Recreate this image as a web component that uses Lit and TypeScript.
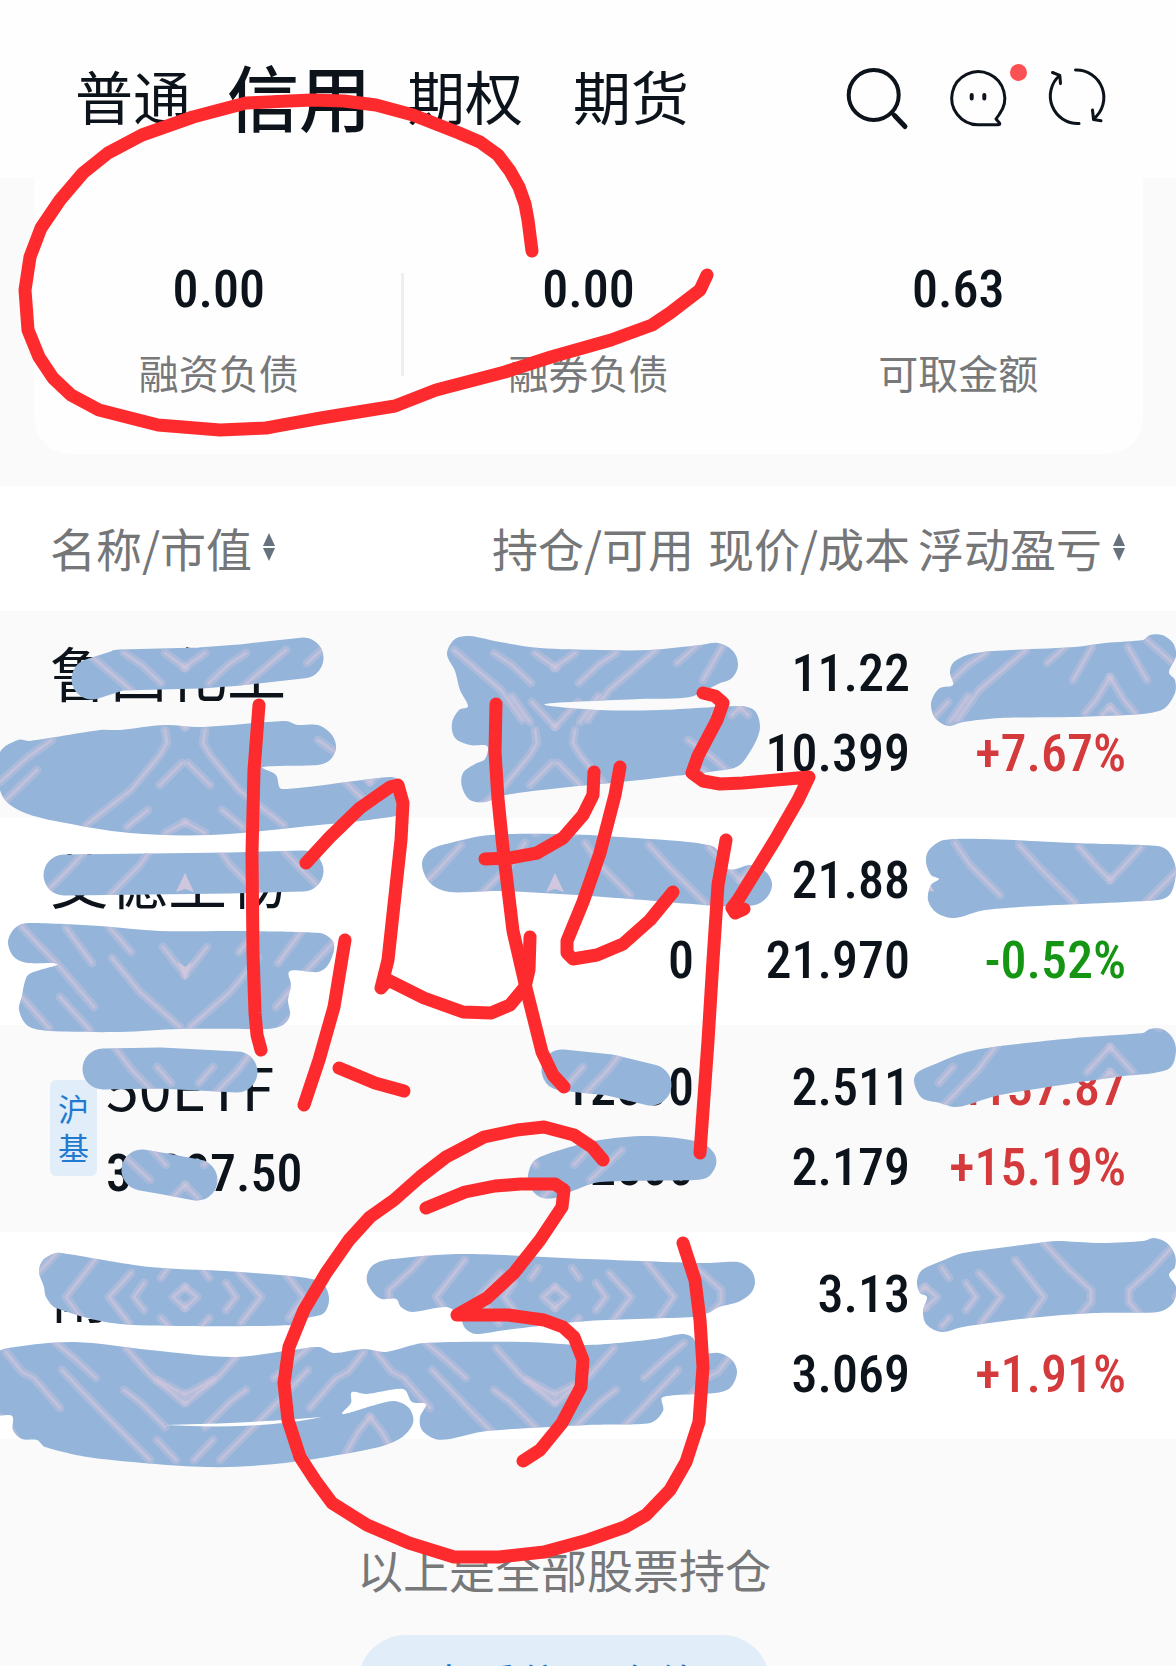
import { LitElement, html, svg, css, nothing } from "lit";
import { customElement, property, state } from "lit/decorators.js";
import { classMap } from "lit/directives/class-map.js";

type Point = [number, number];

interface Holding {
  name: string;
  badge?: string;
  value?: string;
  held?: string;
  available?: string;
  price: string;
  cost: string;
  profit?: string;
  rate: string;
  up: boolean;
}

const TABS = ["普通", "信用", "期权", "期货"];

const STATS = [
  { value: "0.00", label: "融资负债" },
  { value: "0.00", label: "融券负债" },
  { value: "0.63", label: "可取金额" },
];

const HOLDINGS: Holding[] = [
  { name: "鲁西化工", price: "11.22", cost: "10.399", rate: "+7.67%", up: true },
  { name: "艾德生物", available: "0", price: "21.88", cost: "21.970", rate: "-0.52%", up: false },
  {
    name: "50ETF",
    badge: "沪基",
    value: "31387.50",
    held: "12500",
    available: "12500",
    price: "2.511",
    cost: "2.179",
    profit: "+4137.87",
    rate: "+15.19%",
    up: true,
  },
  { name: "南方ETF", price: "3.13", cost: "3.069", rate: "+1.91%", up: true },
];

/* Marker blobs, listed as closed outlines. */
const BLOBS: Point[][] = [
  [[0,752],[18,740],[30,741],[100,730],[120,730],[165,725],[200,727],[285,721],[298,725],[318,725],[332,735],[336,748],[330,760],[318,765],[263,767],[276,775],[282,789],[390,777],[402,783],[404,800],[400,815],[300,827],[210,835],[130,833],[60,822],[25,813],[5,800],[-2,780]],
  [[447,654],[455,639],[470,636],[500,642],[540,648],[600,650],[650,650],[700,645],[718,643],[733,651],[738,665],[732,678],[718,684],[690,697],[640,699],[545,704],[600,710],[660,710],[740,706],[755,711],[760,727],[755,743],[742,763],[730,769],[640,780],[560,788],[505,795],[485,802],[470,800],[462,787],[463,773],[475,764],[485,759],[487,746],[470,745],[455,738],[452,723],[459,710],[468,706],[460,690],[455,671]],
  [[950,673],[953,663],[967,655],[993,651],[1075,647],[1105,643],[1143,640],[1150,635],[1162,635],[1173,643],[1176,656],[1169,672],[1175,680],[1175,693],[1165,708],[1150,713],[1128,715],[1075,717],[1000,718],[963,722],[948,726],[935,718],[931,706],[933,697],[940,688],[953,685]],
  [[8,942],[15,928],[28,923],[100,926],[160,931],[240,931],[320,933],[332,940],[334,950],[328,965],[318,972],[290,971],[291,985],[288,1000],[290,1015],[283,1025],[268,1029],[180,1029],[120,1032],[50,1031],[28,1026],[19,1010],[22,996],[24,985],[28,975],[40,970],[57,965],[52,963],[28,963],[14,957]],
  [[422,864],[430,850],[450,843],[490,835],[560,834],[620,837],[712,846],[728,869],[750,865],[765,871],[772,883],[768,896],[755,905],[720,906],[630,899],[560,894],[500,891],[450,892],[430,883]],
  [[926,862],[929,850],[944,840],[985,839],[1075,843],[1158,846],[1169,852],[1176,870],[1171,893],[1158,900],[1038,906],[985,910],[955,918],[937,913],[928,900],[931,885],[939,879],[931,875]],
  [[528,1175],[535,1160],[560,1150],[600,1140],[650,1136],[700,1142],[714,1153],[716,1165],[708,1177],[695,1180],[600,1182],[575,1190],[555,1198],[540,1197],[530,1187]],
  [[914,1082],[918,1072],[940,1062],[963,1053],[993,1047],[1075,1038],[1143,1033],[1150,1029],[1162,1029],[1172,1037],[1176,1050],[1171,1067],[1154,1073],[1124,1076],[1075,1083],[1000,1095],[967,1105],[954,1107],[940,1103],[922,1098]],
  [[39,1272],[43,1260],[56,1253],[68,1254],[150,1267],[225,1271],[300,1277],[322,1283],[329,1298],[324,1313],[308,1318],[292,1325],[187,1326],[112,1323],[56,1308],[46,1297],[44,1287]],
  [[367,1282],[371,1267],[386,1260],[461,1254],[588,1259],[700,1263],[738,1262],[751,1270],[755,1282],[751,1293],[738,1302],[719,1307],[708,1313],[693,1317],[588,1321],[506,1330],[476,1334],[465,1328],[459,1315],[446,1307],[412,1312],[401,1307],[396,1299],[379,1298]],
  [[-4,1355],[15,1347],[75,1342],[150,1350],[232,1357],[292,1350],[319,1347],[334,1353],[364,1349],[386,1352],[424,1343],[525,1342],[588,1345],[655,1339],[682,1334],[693,1338],[700,1353],[719,1353],[732,1360],[737,1373],[730,1388],[715,1393],[663,1397],[663,1411],[650,1423],[588,1425],[487,1431],[450,1439],[435,1439],[422,1430],[420,1417],[426,1404],[412,1402],[403,1389],[367,1394],[352,1392],[351,1403],[343,1414],[375,1405],[394,1401],[409,1408],[413,1423],[401,1438],[375,1448],[285,1463],[206,1467],[94,1458],[45,1447],[37,1440],[22,1439],[13,1430],[12,1416],[-4,1413]],
  [[917,1282],[922,1270],[944,1260],[963,1253],[1038,1243],[1057,1241],[1102,1243],[1143,1241],[1154,1238],[1167,1243],[1175,1255],[1175,1267],[1169,1275],[1176,1287],[1173,1303],[1158,1312],[1094,1313],[1030,1318],[963,1327],[942,1332],[927,1325],[923,1312],[927,1297],[920,1293]],
];

/* Single marker passes, listed as centre lines. */
const PASSES: Point[][] = [
  [[92,679],[120,670],[200,668],[240,665],[303,658]],
  [[64,875],[150,874],[230,873],[303,871]],
  [[103,1069],[160,1068],[237,1072]],
  [[142,1170],[165,1174],[197,1180]],
  [[562,1070],[610,1075],[651,1085]],
];

/* Light texture inside the marker, for one half tile of 185 units. */
const STREAKS: Point[][] = [
  [[84,650],[131,690],[152,720]], [[124,653],[142,665],[161,683]], [[165,653],[186,668]],
  [[37,640],[63,663]], [[18,647],[37,680]], [[0,677],[14,700],[25,713]], [[0,707],[8,715]],
  [[142,696],[160,722]], [[162,702],[185,727]],
  [[165,730],[167,743],[160,755],[131,790],[86,825]], [[182,763],[160,785]],
  [[52,740],[28,757],[0,782]], [[37,770],[6,800]], [[148,810],[127,827]], [[185,822],[165,833]],
  [[91,845],[70,868],[35,903]], [[155,843],[140,865],[110,895]], [[31,847],[12,868],[0,880]],
  [[22,927],[36,942],[60,967],[94,1007]], [[66,928],[92,963]], [[110,928],[131,952]],
  [[163,947],[185,975]], [[112,958],[140,992],[180,1027]], [[60,997],[90,1030]],
  [[22,997],[49,1028]], [[113,1045],[132,1070],[166,1105]], [[157,1067],[171,1083]],
  [[0,1047],[23,1072]], [[0,1072],[10,1082]], [[148,1145],[166,1165]], [[118,1150],[150,1180]], [[185,1185],[172,1198]],
  [[66,1243],[41,1270],[19,1290],[19,1302],[32,1317]],
  [[95,1260],[66,1297],[81,1318]], [[131,1273],[109,1297],[129,1323]],
  [[144,1283],[134,1297],[144,1310]], [[185,1287],[173,1297],[185,1308]],
  [[168,1268],[161,1278]], [[161,1318],[168,1326]],
  [[6,1352],[22,1372],[34,1378],[60,1408]], [[56,1343],[74,1358],[96,1378]],
  [[126,1348],[150,1375],[184,1403]], [[62,1370],[100,1410],[150,1460]],
  [[124,1390],[140,1402],[165,1427]], [[157,1380],[184,1394]], [[157,1440],[176,1460]],
  [[0,1417],[12,1432],[25,1455]],
];

/* Freehand red pen strokes. */
const PEN: Point[][] = [
  [[532,251],[528,220],[525,204],[519,187],[510,171],[498,155],[480,142],[459,133],[413,115],[376,105],[344,101],[312,100],[246,103],[193,117],[142,135],[108,153],[83,173],[60,200],[41,228],[30,257],[25,290],[28,330],[39,357],[53,378],[71,395],[99,410],[158,425],[220,430],[266,428],[321,418],[395,406],[436,390],[505,372],[551,357],[611,340],[652,325],[670,313],[700,290],[707,275]],
  [[259,705],[254,770],[252,853],[253,953],[255,1013],[257,1035],[261,1050]],
  [[306,863],[330,837],[360,808],[390,787],[398,785],[403,803],[401,840],[388,960],[381,988],[388,980],[424,998],[463,1012],[491,1013],[510,1005],[525,987],[529,970],[530,937]],
  [[345,940],[334,1007],[319,1060],[304,1105]],
  [[339,1068],[375,1083],[404,1091]],
  [[496,704],[495,752],[498,799],[503,848],[513,931],[527,992],[542,1052],[553,1075],[564,1087]],
  [[485,859],[510,858],[537,853],[563,838],[583,815],[593,795],[594,772]],
  [[620,767],[615,795],[600,853],[583,902],[567,941],[567,953],[573,959],[597,955],[623,944],[650,920],[673,892]],
  [[703,693],[715,696],[723,703],[717,720],[698,756],[692,773],[703,781],[720,784],[743,783],[809,777],[798,800],[775,840],[738,900],[732,908],[735,913],[744,909]],
  [[726,840],[718,885],[713,960],[708,1041],[700,1153]],
  [[603,1160],[592,1147],[574,1135],[544,1127],[517,1130],[484,1137],[446,1157],[420,1177],[394,1200],[370,1217],[349,1240],[326,1273],[304,1310],[289,1347],[284,1383],[288,1420],[300,1457],[315,1480],[332,1503],[367,1525],[409,1543],[454,1557],[499,1557],[544,1552],[588,1540],[625,1527],[646,1515],[670,1490],[686,1462],[699,1422],[703,1367],[700,1320],[695,1280],[683,1243]],
  [[426,1208],[465,1192],[495,1186],[521,1184],[555,1184],[564,1190],[562,1207],[540,1240],[514,1273],[487,1298],[457,1315],[508,1315],[544,1320],[563,1327],[574,1337],[583,1360],[581,1387],[562,1423],[540,1450],[523,1461]],
];

const line = (pts: Point[]) => "M" + pts.map((p) => p.join(" ")).join("L");

/* Closed Catmull-Rom curve through every point. */
function loop(pts: Point[]): string {
  const n = pts.length;
  const at = (i: number) => pts[(i + n) % n];
  let d = `M${pts[0].join(" ")}`;
  for (let i = 0; i < n; i++) {
    const [a, b, c, e] = [at(i - 1), at(i), at(i + 1), at(i + 2)];
    const k = 1 / 6;
    const reach = Math.hypot(c[0] - b[0], c[1] - b[1]) / 3;
    const handle = (x: number, y: number): Point => {
      const len = Math.hypot(x, y) || 1;
      const s = Math.min(1, reach / len);
      return [x * s, y * s];
    };
    const h1 = handle((c[0] - a[0]) * k, (c[1] - a[1]) * k);
    const h2 = handle((e[0] - b[0]) * k, (e[1] - b[1]) * k);
    d += `C${b[0] + h1[0]} ${b[1] + h1[1]} ${c[0] - h2[0]} ${c[1] - h2[1]} ${c[0]} ${c[1]}`;
  }
  return d + "Z";
}

@customElement("ink-layer")
class InkLayer extends LitElement {
  static styles = css`
    :host {
      display: block;
      pointer-events: none;
    }
    svg {
      display: block;
      width: 100%;
      height: auto;
    }
    .marker path {
      fill: #94b4da;
    }
    .marker .pass {
      fill: none;
      stroke: #94b4da;
    }
    .cut path {
      fill: #fff;
    }
    .cut .pass {
      fill: none;
      stroke: #fff;
    }
    .pass {
      stroke-width: 41px;
      stroke-linecap: round;
      stroke-linejoin: round;
    }
    .texture path {
      fill: none;
      stroke: #d0c6de;
      stroke-linecap: round;
      stroke-linejoin: round;
    }
    .wide {
      stroke-width: 9px;
      opacity: 0.35;
    }
    .fine {
      stroke-width: 3px;
      opacity: 0.6;
    }
    .peak {
      fill: #d0c6de;
    }
    .pen path {
      fill: none;
      stroke: #fd2b2d;
      stroke-width: 13px;
      stroke-linecap: round;
      stroke-linejoin: round;
    }
  `;

  private shapes() {
    return svg`
      ${BLOBS.map((b) => svg`<path d=${loop(b)}></path>`)}
      ${PASSES.map((p) => svg`<path class="pass" d=${line(p)}></path>`)}
    `;
  }

  private halfTile() {
    return svg`
      ${STREAKS.map(
        (s) => svg`<path class="wide" d=${line(s)}></path><path class="fine" d=${line(s)}></path>`,
      )}
      <polygon class="peak" points="185,873 176,892 185,889"></polygon>
      <polygon class="peak" points="178,962 185,967 185,980"></polygon>
    `;
  }

  render() {
    return html`
      <svg viewBox="0 0 1176 1666" aria-hidden="true">
        <mask id="marker-cut" maskUnits="userSpaceOnUse" x="0" y="0" width="1176" height="1666">
          <g class="cut">${this.shapes()}</g>
        </mask>
        <g class="marker">${this.shapes()}</g>
        <g class="texture" mask="url(#marker-cut)">
          ${[0, 1, 2, 3].map(
            (i) => svg`
              <g transform="translate(${i * 370} 0)">${this.halfTile()}</g>
              <g transform="translate(${(i + 1) * 370} 0) scale(-1 1)">${this.halfTile()}</g>
            `,
          )}
        </g>
        <path d="M165 1425Q240 1424 322 1417Q260 1430 165 1425Z" fill="#fff"></path>
        <g class="pen">${PEN.map((p) => svg`<path d=${line(p)}></path>`)}</g>
      </svg>
    `;
  }
}

@customElement("sort-mark")
class SortMark extends LitElement {
  static styles = css`
    :host {
      display: inline-flex;
    }
    svg {
      width: 14px;
      height: 28px;
      fill: #66737f;
    }
  `;

  render() {
    return html`<svg viewBox="0 0 14 28" aria-hidden="true">
      <path d="M7 0L13 13H1Z"></path>
      <path d="M7 28L13 15H1Z"></path>
    </svg>`;
  }
}

@customElement("holdings-table")
class HoldingsTable extends LitElement {
  @property({ attribute: false }) rows: Holding[] = [];

  static styles = css`
    :host {
      display: block;
    }
    table {
      width: 100%;
      border-collapse: collapse;
      table-layout: fixed;
    }
    .col-mid {
      width: 216px;
    }
    .col-last {
      width: 266px;
    }
    th,
    td {
      padding: 0;
      text-align: right;
      vertical-align: top;
      white-space: nowrap;
    }
    th:first-child,
    td:first-child {
      padding-left: 50px;
      text-align: left;
    }
    th:last-child,
    td:last-child {
      padding-right: 50px;
    }
    thead tr {
      height: 125px;
      background: #fff;
    }
    th {
      padding-bottom: 4px;
      vertical-align: middle;
      color: #757678;
      font-size: 46px;
      font-weight: 400;
      line-height: 60px;
    }
    .sort {
      display: inline-flex;
      align-items: center;
      gap: 10px;
      padding: 0;
      border: 0;
      background: none;
      color: inherit;
      font: inherit;
      cursor: pointer;
    }
    tbody tr {
      background: #fff;
    }
    tbody tr:nth-child(odd) {
      background: #fafafa;
    }
    tbody td {
      height: 207px;
      box-sizing: border-box;
      padding-top: 23px;
      color: #0d131b;
      font-family: "Roboto Condensed", "Liberation Sans Narrow", "Noto Sans CJK SC", sans-serif;
      font-size: 52px;
      font-weight: 500;
      line-height: 80px;
    }
    tbody td:first-child {
      padding-top: 19px;
    }
    .line {
      display: block;
      min-height: 80px;
    }
    .asset {
      display: flex;
      align-items: flex-start;
      gap: 9px;
    }
    .asset .line {
      min-height: 84px;
      line-height: 84px;
    }
    .asset .name {
      margin-bottom: 4px;
      font-family: "Noto Sans CJK SC", sans-serif;
      font-size: 59px;
      font-weight: 400;
    }
    .badge {
      width: 31px;
      margin-top: 36px;
      padding: 8px 8px 10px;
      border-radius: 6px;
      background: #e1edf9;
      color: #1f7ad0;
      font-family: "Noto Sans CJK SC", sans-serif;
      font-size: 31px;
      font-weight: 400;
      line-height: 39px;
      white-space: normal;
    }
    .up {
      color: #d43a3c;
    }
    .down {
      color: #149614;
    }
  `;

  private row(h: Holding) {
    const tone = classMap({ line: true, up: h.up, down: !h.up });
    return html`<tr>
      <td>
        <div class="asset">
          ${h.badge ? html`<span class="badge">${h.badge}</span>` : nothing}
          <div>
            <span class="line name">${h.name}</span>
            <span class="line">${h.value ?? nothing}</span>
          </div>
        </div>
      </td>
      <td>
        <span class="line">${h.held ?? nothing}</span>
        <span class="line">${h.available ?? nothing}</span>
      </td>
      <td>
        <span class="line">${h.price}</span>
        <span class="line">${h.cost}</span>
      </td>
      <td>
        <span class=${tone}>${h.profit ?? nothing}</span>
        <span class=${tone}>${h.rate}</span>
      </td>
    </tr>`;
  }

  render() {
    return html`<table>
      <colgroup>
        <col />
        <col class="col-mid" />
        <col class="col-mid" />
        <col class="col-last" />
      </colgroup>
      <thead>
        <tr>
          <th scope="col"><button class="sort">名称/市值<sort-mark></sort-mark></button></th>
          <th scope="col">持仓/可用</th>
          <th scope="col">现价/成本</th>
          <th scope="col"><button class="sort">浮动盈亏<sort-mark></sort-mark></button></th>
        </tr>
      </thead>
      <tbody>
        ${this.rows.map((h) => this.row(h))}
      </tbody>
    </table>`;
  }
}

@customElement("app-root")
class AppRoot extends LitElement {
  @state() private active = 1;

  static styles = css`
    :host {
      display: flex;
      flex-direction: column;
      position: relative;
      min-height: 100vh;
      overflow: hidden;
      background: #fafafa;
      color: #0d131b;
      font-family: "Noto Sans CJK SC", sans-serif;
    }
    button {
      padding: 0;
      border: 0;
      background: none;
      color: inherit;
      font-family: inherit;
      cursor: pointer;
    }
    .top {
      display: flex;
      align-items: center;
      justify-content: space-between;
      height: 178px;
      padding: 0 69px 0 50px;
      background: #fefefe;
    }
    .tabs {
      display: grid;
      grid-template-columns: repeat(4, 166px);
      align-items: center;
      padding-top: 12px;
    }
    .tab {
      font-size: 58px;
      line-height: 80px;
      white-space: nowrap;
    }
    .tab.active {
      font-size: 72px;
      font-weight: 500;
    }
    .tools {
      display: flex;
      align-items: center;
      gap: 42px;
      padding-top: 18px;
    }
    .tool {
      position: relative;
      display: flex;
    }
    .tool svg {
      width: 62px;
      height: 62px;
      fill: none;
      stroke: #0d131b;
      stroke-width: 3px;
      stroke-linecap: round;
      stroke-linejoin: round;
      overflow: visible;
    }
    .tool .bold {
      stroke-width: 4px;
    }
    .tool .heavy {
      stroke-width: 5px;
    }
    .tool.chat svg,
    .tool.refresh svg {
      width: 58px;
      height: 58px;
    }
    .dot {
      position: absolute;
      top: -5px;
      right: -20px;
      width: 17px;
      height: 17px;
      border-radius: 50%;
      background: #fb5152;
    }
    .card {
      display: grid;
      grid-template-columns: repeat(3, 1fr);
      margin: 0 33px 32px 34px;
      padding: 76px 0 57px;
      border-radius: 0 0 36px 36px;
      background: #fefefe;
    }
    .stat {
      display: flex;
      flex-direction: column;
      align-items: center;
      gap: 21px;
      margin: 0;
    }
    .stat:first-child {
      background: linear-gradient(#eeeeee, #eeeeee) right 19px / 3px 103px no-repeat;
    }
    .amount {
      order: -1;
      margin: 0;
      font-family: "Roboto Condensed", "Liberation Sans Narrow", sans-serif;
      font-size: 52px;
      font-weight: 500;
      line-height: 72px;
    }
    .label {
      color: #77787a;
      font-size: 40px;
      line-height: 50px;
    }
    .foot {
      display: flex;
      flex: 1 1 0;
      flex-direction: column;
      align-items: center;
      padding: 99px 48px 0 0;
    }
    .note {
      margin: 0;
      color: #77787a;
      font-size: 46px;
      line-height: 60px;
    }
    .peek {
      width: 412px;
      height: 32px;
      margin-top: 37px;
      overflow: hidden;
    }
    .more {
      width: 100%;
      height: 96px;
      border-radius: 48px;
      background: #e1edf9;
      color: #1f6fc0;
      font-size: 46px;
      line-height: 60px;
    }
    .ink {
      position: absolute;
      inset: 0 0 auto;
    }
  `;

  render() {
    return html`
      <header class="top">
        <nav class="tabs" role="tablist">
          ${TABS.map(
            (t, i) => html`<button
              role="tab"
              aria-selected=${i === this.active ? "true" : "false"}
              class=${classMap({ tab: true, active: i === this.active })}
              @click=${() => (this.active = i)}
            >${t}</button>`,
          )}
        </nav>
        <div class="tools">
          <button class="tool" aria-label="搜索">
            <svg viewBox="0 0 62 62">
              <circle class="bold" cx="28.7" cy="28" r="25"></circle>
              <path class="bold" d="M46.5 45.5L50 49"></path>
              <path class="heavy" d="M50 49L60 59.5"></path>
            </svg>
          </button>
          <button class="tool chat" aria-label="消息">
            <svg viewBox="0 0 58 58">
              <path d="M47 50L50.5 45A26.5 26.5 0 1 0 28.7 55.7H49.5Q51.5 55.7 50.5 54Z M47 50L50.5 54"></path>
              <path class="bold" d="M22.7 26V29.5M35.3 26V29.5"></path>
            </svg>
            <span class="dot"></span>
          </button>
          <button class="tool refresh" aria-label="刷新">
            <svg viewBox="0 0 58 58">
              <path d="M26.5 1A27.5 27.5 0 0 1 44.5 50M43.5 41L44.5 50.5L52 51.7"></path>
              <path d="M30 54.5A27.5 27.5 0 0 1 10.5 6.5M3.5 3.5L10.8 6.3L11.5 14.5"></path>
            </svg>
          </button>
        </div>
      </header>
      <dl class="card">
        ${STATS.map(
          (s) => html`<div class="stat">
            <dt class="label">${s.label}</dt>
            <dd class="amount">${s.value}</dd>
          </div>`,
        )}
      </dl>
      <holdings-table .rows=${HOLDINGS}></holdings-table>
      <footer class="foot">
        <p class="note">以上是全部股票持仓</p>
        <div class="peek"><button class="more">查看信用合约</button></div>
      </footer>
      <ink-layer class="ink"></ink-layer>
    `;
  }
}
